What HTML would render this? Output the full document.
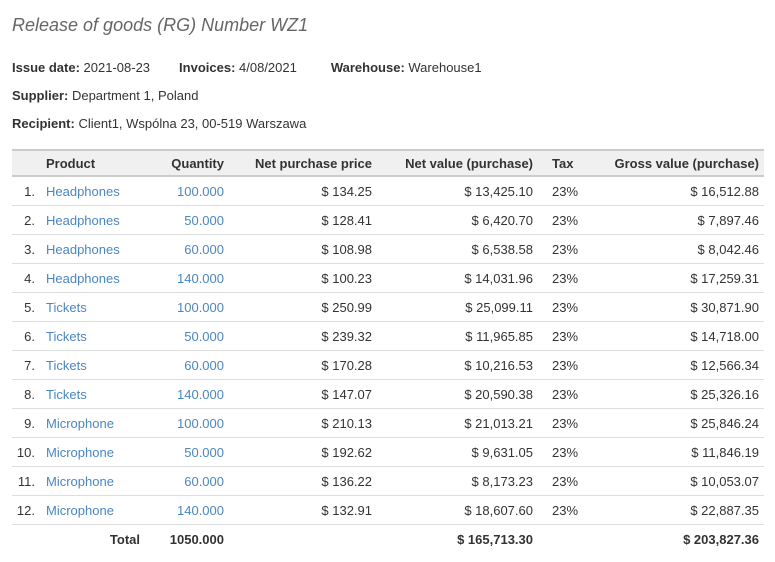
<!DOCTYPE html>
<html><head><meta charset="utf-8"><style>
body{margin:0;background:#fff;font-family:"Liberation Sans",Arial,sans-serif;font-size:13px;color:#333;width:775px;height:562px;overflow:hidden}
h1{position:absolute;left:12px;top:15px;margin:0;font-size:18px;font-weight:normal;font-style:italic;color:#666}
.info{position:absolute;left:12px;margin:0;font-size:13px;color:#333}
.info b{font-weight:bold}
table{position:absolute;left:12px;top:149px;width:752px;border-collapse:collapse;table-layout:fixed}
th,td{padding:0;white-space:nowrap;border-bottom:1px solid #ddd}
th{background:#f0f0f0;font-weight:bold;height:24px;border-top:2px solid #ccc;border-bottom:2px solid #ccc}
td{height:28px}
.r{text-align:right}
.l{text-align:left}
.a{color:#4a86c5}
tr.tot td{border-bottom:none;font-weight:bold}
</style></head><body>
<h1>Release of goods (RG) Number WZ1</h1>
<p class="info" style="top:60px"><b>Issue date:</b> 2021-08-23<span style="display:inline-block;width:29px"></span><b>Invoices:</b> 4/08/2021<span style="display:inline-block;width:34px"></span><b>Warehouse:</b> Warehouse1</p>
<p class="info" style="top:88px"><b>Supplier:</b> Department 1, Poland</p>
<p class="info" style="top:116px"><b>Recipient:</b> Client1, Wspólna 23, 00-519 Warszawa</p>
<table>
<colgroup><col style="width:26px"><col style="width:102px"><col style="width:92px"><col style="width:148px"><col style="width:161px"><col style="width:39px"><col style="width:184px"></colgroup>
<tr><th></th><th class="l" style="padding-left:8px">Product</th><th class="r" style="padding-right:8px">Quantity</th><th class="r" style="padding-right:8px">Net purchase price</th><th class="r" style="padding-right:8px">Net value (purchase)</th><th class="l" style="padding-left:11px">Tax</th><th class="r" style="padding-right:5px">Gross value (purchase)</th></tr>
<tbody id="b"></tbody>
</table>
<script>
var d=[["Headphones","100.000","134.25","13,425.10","16,512.88"],["Headphones","50.000","128.41","6,420.70","7,897.46"],["Headphones","60.000","108.98","6,538.58","8,042.46"],["Headphones","140.000","100.23","14,031.96","17,259.31"],["Tickets","100.000","250.99","25,099.11","30,871.90"],["Tickets","50.000","239.32","11,965.85","14,718.00"],["Tickets","60.000","170.28","10,216.53","12,566.34"],["Tickets","140.000","147.07","20,590.38","25,326.16"],["Microphone","100.000","210.13","21,013.21","25,846.24"],["Microphone","50.000","192.62","9,631.05","11,846.19"],["Microphone","60.000","136.22","8,173.23","10,053.07"],["Microphone","140.000","132.91","18,607.60","22,887.35"]];
var h="";d.forEach(function(r,i){h+='<tr><td class="r" style="padding-right:3px">'+(i+1)+'.</td><td class="a" style="padding-left:8px">'+r[0]+'</td><td class="r a" style="padding-right:8px">'+r[1]+'</td><td class="r" style="padding-right:8px">$ '+r[2]+'</td><td class="r" style="padding-right:8px">$ '+r[3]+'</td><td style="padding-left:11px">23%</td><td class="r" style="padding-right:5px">$ '+r[4]+'</td></tr>';});
h+='<tr class="tot"><td></td><td class="r" style="padding-right:0">Total</td><td class="r" style="padding-right:8px">1050.000</td><td></td><td class="r" style="padding-right:8px">$ 165,713.30</td><td></td><td class="r" style="padding-right:5px">$ 203,827.36</td></tr>';
document.getElementById("b").innerHTML=h;
</script>
</body></html>
